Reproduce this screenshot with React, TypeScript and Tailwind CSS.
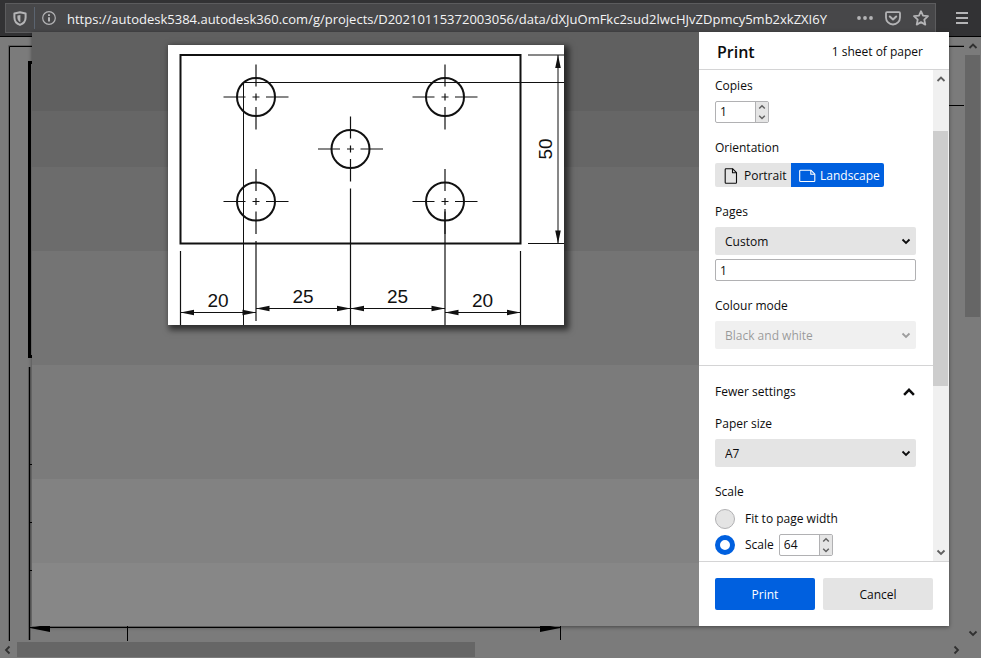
import { useState } from "react";
import type { ReactNode } from "react";

const PAGE_URL =
  "https://autodesk5384.autodesk360.com/g/projects/D20210115372003056/data/dXJuOmFkc2sud2lwcHJvZDpmcy5mb2xkZXI6Y";

type Direction = "up" | "down" | "left" | "right";

const arrowPaths: Record<Direction, string> = {
  up: "M1.5 7 5 3.5 8.5 7",
  down: "M1.5 3.5 5 7 8.5 3.5",
  left: "M6.5 1.5 3 5l3.5 3.5",
  right: "M3.5 1.5 7 5 3.5 8.5",
};

function Arrow({ direction, className }: { direction: Direction; className?: string }) {
  return (
    <svg viewBox="0 0 10 10" fill="none" stroke="currentColor" strokeWidth="1.8" className={className} aria-hidden="true">
      <path d={arrowPaths[direction]} />
    </svg>
  );
}

function Toolbar() {
  return (
    <header className="flex h-[37px] shrink-0 items-start border-b border-black bg-[#323234] pt-[3px] pl-[5px] text-[#b4b4b6]">
      <div className="flex h-[30px] min-w-0 flex-1 items-center border border-[#5c5c5e] bg-[#474749]">
        <button type="button" title="Tracking protection" className="flex w-7 justify-center">
          <svg width="14" height="15" viewBox="0 0 14 15" fill="none" aria-hidden="true">
            <path d="M7 1.3 12.6 2.5V6.5C12.6 10 10.5 12.6 7 13.9 3.5 12.6 1.4 10 1.4 6.5V2.5Z" stroke="currentColor" strokeWidth="2" strokeLinejoin="round" />
            <path d="M7.4 4 4.4 4.6V6.5c0 2.2 1 3.8 3 4.8Z" fill="currentColor" />
          </svg>
        </button>
        <span className="h-[22px] w-px bg-[#5b6470]" />
        <button type="button" title="Site information" className="flex w-7 justify-center">
          <svg width="14" height="14" viewBox="0 0 14 14" fill="none" stroke="currentColor" aria-hidden="true">
            <circle cx="7" cy="7" r="6.3" strokeWidth="1.2" />
            <path d="M7 6.2v4.4M7 3.2v1.8" strokeWidth="2" />
          </svg>
        </button>
        <input
          aria-label="Address"
          readOnly
          value={PAGE_URL}
          className="ml-1 min-w-0 flex-1 bg-transparent pt-0.5 text-[13px] text-[#f4f4f5] outline-none"
        />
        <div className="flex items-center">
          <button type="button" title="Page actions" className="flex w-7 justify-center">
            <svg width="16" height="4" viewBox="0 0 16 4" fill="currentColor" aria-hidden="true">
              <circle cx="2" cy="2" r="1.9" />
              <circle cx="8" cy="2" r="1.9" />
              <circle cx="14" cy="2" r="1.9" />
            </svg>
          </button>
          <button type="button" title="Save to Pocket" className="flex w-7 justify-center">
            <svg width="16" height="15" viewBox="0 0 16 15" fill="none" stroke="currentColor" strokeLinecap="round" strokeLinejoin="round" aria-hidden="true">
              <path d="M2 1.2h12q1 0 1 1V6.5a7 7 0 0 1-14 0V2.2q0-1 1-1Z" strokeWidth="1.8" />
              <path d="M4.8 5.5 8 8.5l3.2-3" strokeWidth="2" />
            </svg>
          </button>
          <button type="button" title="Bookmark this page" className="flex w-7 justify-center">
            <svg width="16" height="16" viewBox="0 0 16 16" fill="none" stroke="currentColor" strokeWidth="1.8" strokeLinejoin="round" aria-hidden="true">
              <path d="m8 1.2 2 4.5 5 .5-3.7 3.4 1 5L8 12.1l-4.3 2.5 1-5L1 6.2l5-.5Z" />
            </svg>
          </button>
        </div>
      </div>
      <button type="button" title="Open menu" className="flex h-[30px] w-[45px] items-center justify-center pl-1.5">
        <svg width="12" height="12" viewBox="0 0 12 12" stroke="currentColor" strokeWidth="2" aria-hidden="true">
          <path d="M0 1h12M0 6h12M0 11h12" />
        </svg>
      </button>
    </header>
  );
}

// Drawing sheet that stays visible round the edges of the dialog
function BackgroundSheet() {
  return (
    <svg className="block h-full w-full" stroke="black" fill="none" aria-hidden="true">
      <path d="M8.5 604V8.5H964" stroke="#5f5f5f" />
      <path d="M9.5 604V9.5H964" />
      <path d="M940 68.5H964" />
      <path d="M34 25.5H29.5V319.5H34" strokeWidth="3" />
      <path d="M29.5 330V603" strokeWidth="1.5" />
      <path d="M29 427.5h5M29 485.5h5M29 533.5h5M30 590.5H560M127.5 589v15M560.5 589v14" />
      <path d="M30 591 50 587v8ZM560 591 540 587v8Z" fill="black" stroke="none" />
    </svg>
  );
}

const holes = [
  [88, 52],
  [277, 52],
  [182.5, 104],
  [88, 156.5],
  [277, 156.5],
];

const dimensions = [
  { from: 12.5, to: 88, y: 267.5, label: "20", labelX: 50 },
  { from: 88, to: 182.5, y: 263.5, label: "25", labelX: 135 },
  { from: 182.5, to: 277, y: 263.5, label: "25", labelX: 229.5 },
  { from: 277, to: 352.5, y: 267.5, label: "20", labelX: 314.5 },
];

function PreviewSheet() {
  return (
    <svg
      viewBox="0 0 396 280"
      className="block w-[396px] bg-white font-['Liberation_Sans',sans-serif] text-[19px] shadow-[3px_3px_6px_2px_rgba(0,0,0,0.6)]"
      fill="none"
      stroke="#111111"
      role="img"
      aria-label="Plate with five holes"
    >
      <rect x="12.5" y="10" width="340" height="188.5" strokeWidth="2" />
      <path d="M75.5 280V37.5H396" />
      {holes.map(([x, y]) => (
        <g key={`${x}-${y}`} transform={`translate(${x} ${y})`}>
          <circle r="19" strokeWidth="2" />
          <path d="M-32.5 0h22M-3.5 0h7M10 0h22.5M0-32.5v22M0-3.5v7M0 10v22.5" strokeWidth="1.2" />
        </g>
      ))}
      <path d="M12.5 206V280M352.5 206V280M88 196V276M182.5 143.5V280M277 164V280" strokeWidth="1.2" />
      <path d="M360 10h36M360 198.5h36M390 10V198" />
      <path d="m390 10-2.8 13h5.6ZM390 198.5l-2.8-13h5.6Z" fill="#111111" stroke="none" />
      {dimensions.map(({ from, to, y, label, labelX }) => (
        <g key={from}>
          <path d={`M${from} ${y}H${to}`} />
          <path d={`M${from} ${y}l13.5-2.8v5.6ZM${to} ${y}l-13.5-2.8v5.6Z`} fill="#111111" stroke="none" />
          <text x={labelX} y={y - 6} textAnchor="middle" fill="#111111" stroke="none">
            {label}
          </text>
        </g>
      ))}
      <text transform="translate(384 104) rotate(-90)" textAnchor="middle" fill="#111111" stroke="none">
        50
      </text>
    </svg>
  );
}

function NumberField({ id, label, initial }: { id: string; label?: string; initial: number }) {
  const [value, setValue] = useState(initial);

  return (
    <div className="flex h-[22px] w-[54px] rounded-[2px] border border-[#b1b1b3] bg-white">
      <input
        id={id}
        type="number"
        aria-label={label}
        value={value}
        onChange={(e) => setValue(Number(e.target.value))}
        className="w-[39px] appearance-none pl-1 outline-none [&::-webkit-inner-spin-button]:appearance-none"
      />
      <div className="flex flex-1 flex-col border-l border-[#b1b1b3] bg-[#e5e5e5] text-[#606060]">
        <button type="button" aria-label="Increase" className="flex flex-1 items-center justify-center" onClick={() => setValue(value + 1)}>
          <Arrow direction="up" className="size-2" />
        </button>
        <button type="button" aria-label="Decrease" className="flex flex-1 items-center justify-center" onClick={() => setValue(value - 1)}>
          <Arrow direction="down" className="size-2" />
        </button>
      </div>
    </div>
  );
}

interface SelectFieldProps {
  id: string;
  options: string[];
  disabled?: boolean;
}

function SelectField({ id, options, disabled = false }: SelectFieldProps) {
  return (
    <div className={disabled ? "relative opacity-40" : "relative"}>
      <select
        id={id}
        disabled={disabled}
        className={
          disabled
            ? "block h-7 w-full appearance-none rounded-[2px] bg-[#dcdcdc] pt-px pl-2.5 text-black"
            : "block h-7 w-full appearance-none rounded-[2px] bg-[#e4e4e4] pt-px pl-2.5"
        }
      >
        {options.map((option) => (
          <option key={option}>{option}</option>
        ))}
      </select>
      <Arrow direction="down" className="pointer-events-none absolute top-[9px] right-[5px] size-2.5" />
    </div>
  );
}

function Field({ id, label, children }: { id: string; label: string; children: ReactNode }) {
  return (
    <div className="flex flex-col gap-[5px]">
      <label htmlFor={id}>{label}</label>
      {children}
    </div>
  );
}

function OrientationPicker() {
  return (
    <fieldset>
      <legend className="mb-[5px]">Orientation</legend>
      <div className="flex h-6">
        <label className="flex w-[76px] items-center gap-1.5 rounded-l-[2px] bg-[#e4e4e4] pt-px pl-[9px]">
          <input type="radio" name="orientation" className="sr-only" />
          <svg width="14" height="16" viewBox="0 0 14 16" fill="none" stroke="currentColor" strokeWidth="1.1" strokeLinejoin="round" aria-hidden="true">
            <path d="M2 .7h6.5l4 4V14.5q0 .8-.8.8H2q-.8 0-.8-.8v-13q0-.8.8-.8Z" />
            <path d="M8.5.7v4h4" />
          </svg>
          Portrait
        </label>
        <label className="flex w-[93px] items-center gap-1 rounded-r-[2px] bg-[#0060df] pt-px pl-2 text-white">
          <input type="radio" name="orientation" className="sr-only" defaultChecked />
          <svg width="17" height="14" viewBox="0 0 17 14" fill="none" stroke="currentColor" strokeWidth="1.1" strokeLinejoin="round" aria-hidden="true">
            <path d="M1.5 1.2h10.3l4 4v6.5q0 .8-.8.8H1.5q-.8 0-.8-.8V2q0-.8.8-.8Z" />
            <path d="M11.8 1.2v4h4" />
          </svg>
          Landscape
        </label>
      </div>
    </fieldset>
  );
}

const radioClass =
  "size-5 shrink-0 appearance-none rounded-full border border-[#b1b1b3] bg-[#e4e4e4] checked:border-5 checked:border-[#0060df] checked:bg-white";

function PrintSettings() {
  return (
    <div className="min-w-0 flex-1 overflow-hidden">
      <div className="flex flex-col gap-[15px] border-b border-[#d4d4d5] pt-1.5 pr-[17px] pb-4 pl-4">
        <Field id="copies" label="Copies">
          <NumberField id="copies" initial={1} />
        </Field>
        <OrientationPicker />
        <Field id="pages" label="Pages">
          <div className="flex flex-col gap-1">
            <SelectField id="pages" options={["Custom", "All"]} />
            <input
              aria-label="Page range"
              defaultValue="1"
              className="h-[22px] w-full rounded-[2px] border border-[#b1b1b3] pl-1 outline-none"
            />
          </div>
        </Field>
        <Field id="colour" label="Colour mode">
          <SelectField id="colour" options={["Black and white", "Colour"]} disabled />
        </Field>
      </div>

      <div className="pt-4 pr-[17px] pl-4">
        <button type="button" className="mb-3 flex w-full items-center justify-between" aria-expanded="true">
          Fewer settings
          <Arrow direction="up" className="size-3.5" />
        </button>
        <div className="flex flex-col gap-[15px]">
          <Field id="paper" label="Paper size">
            <SelectField id="paper" options={["A7", "A4"]} />
          </Field>
          <fieldset>
            <legend className="mb-1.5">Scale</legend>
            <div className="flex flex-col gap-1">
              <label className="flex h-[22px] items-center gap-2.5">
                <input type="radio" name="scale" className={radioClass} />
                Fit to page width
              </label>
              <div className="flex items-center gap-[5px]">
                <label className="flex h-[22px] items-center gap-2.5">
                  <input type="radio" name="scale" className={radioClass} defaultChecked />
                  Scale
                </label>
                <NumberField id="scale-value" label="Scale percentage" initial={64} />
              </div>
            </div>
          </fieldset>
        </div>
      </div>
    </div>
  );
}

function PrintDialog() {
  return (
    <section
      role="dialog"
      aria-label="Print"
      className="absolute inset-8 flex shadow-[0_1px_4px_rgba(0,0,0,0.45)]"
    >
      <div className="min-w-0 flex-1 overflow-hidden bg-[linear-gradient(#606060_13.3%,#666666_13.3%_22.7%,#6c6c6c_22.7%_36.9%,#747474_36.9%_56.1%,#7b7b7b_56.1%_75.3%,#828282_75.3%_89.4%,#878787_89.4%)] pt-[13px] pl-[136px]">
        <PreviewSheet />
      </div>

      <div className="flex w-[250px] shrink-0 flex-col bg-white">
        <div className="flex h-[38px] shrink-0 items-center justify-between border-b border-[#d4d4d5] pt-0.5 pr-[26px] pl-[18px]">
          <h1 className="text-base font-semibold">Print</h1>
          <p>1 sheet of paper</p>
        </div>
        <div className="flex min-h-0 flex-1">
          <PrintSettings />
          <div className="flex w-4 shrink-0 flex-col items-center bg-[#f0f0f0] pr-px text-[#606060]">
            <Arrow direction="up" className="my-1 size-2.5" />
            <div className="mt-[43px] h-[255px] w-full bg-[#cdcdcd]" />
            <Arrow direction="down" className="mt-auto mb-1 size-2.5" />
          </div>
        </div>
        <div className="flex shrink-0 gap-2 border-t border-[#d4d4d5] p-4">
          <button type="button" className="h-8 w-[100px] rounded-[2px] bg-[#0060df] pt-0.5 text-white">
            Print
          </button>
          <button type="button" className="h-8 flex-1 rounded-[2px] bg-[#e4e4e4] pt-0.5">
            Cancel
          </button>
        </div>
      </div>
    </section>
  );
}

export default function App() {
  return (
    <div className="relative flex h-screen flex-col overflow-hidden bg-[#7b7b7b] font-['Open_Sans',sans-serif] text-xs leading-5 text-[#0c0c0d]">
      <Toolbar />
      <div className="flex min-h-0 flex-1">
        <main className="min-w-0 flex-1">
          <BackgroundSheet />
        </main>
        <div className="flex w-4 flex-col items-center pr-px text-[#303030]">
          <Arrow direction="up" className="my-1 size-2.5" />
          <div className="h-[262px] w-full bg-[#666666]" />
          <Arrow direction="down" className="mt-auto mb-1 size-2.5" />
        </div>
      </div>
      <div className="flex h-4 shrink-0 items-center pr-4 pb-px text-[#303030]">
        <Arrow direction="left" className="mr-1 ml-[3px] size-2.5" />
        <div className="h-full w-[458px] bg-[#666666]" />
        <Arrow direction="right" className="mr-1 ml-auto size-2.5" />
      </div>
      <PrintDialog />
    </div>
  );
}
